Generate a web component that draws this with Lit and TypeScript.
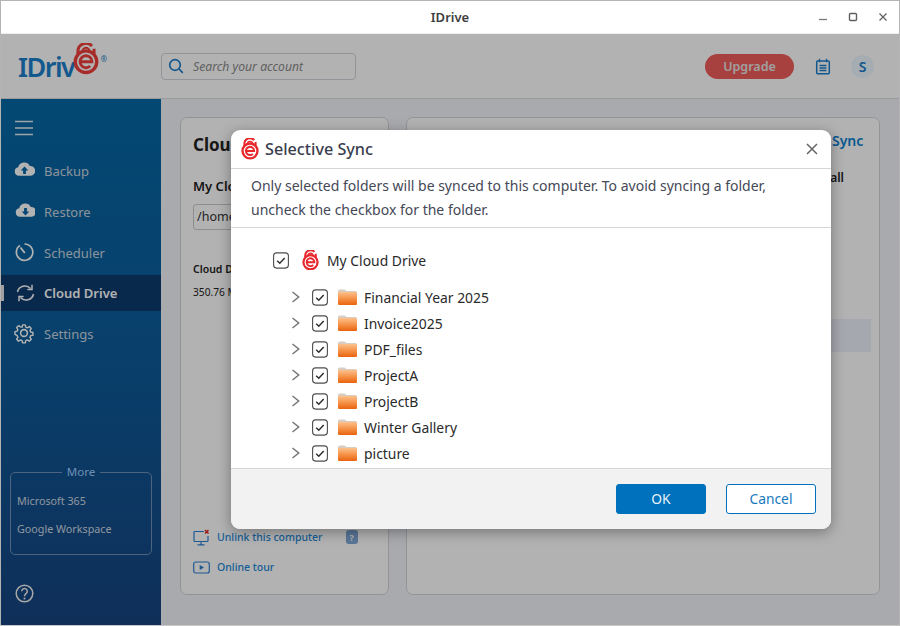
import { LitElement, html, css, svg } from "lit";
import { customElement } from "lit/decorators.js";

const lock = (size: number, cls = "") => html`<svg class="lock ${cls}" width="${size}" height="${size * 1.2}" viewBox="0 0 20 24">
  <path d="M3.800 8.500V6.500a6.200 6.200 0 0 1 10.800-4.200M16.200 4.500v4.500" fill="none" stroke="currentColor" stroke-width="2.300"/>
  <path d="M7.200 6.500a2.800 2.800 0 0 1 5.600 0" fill="none" stroke="currentColor" stroke-width="1.500"/>
  <circle cx="10" cy="14.400" r="8.300" fill="#fff" stroke="currentColor" stroke-width="2.600"/>
  <path d="M5.400 14.400h9.200a4.600 4.600 0 1 0-1.400 3.300" fill="none" stroke="currentColor" stroke-width="2.200"/>
</svg>`;

const chk = html`<svg class="chk" width="16" height="17" viewBox="0 0 16 17">
  <rect x=".6" y=".9" width="14.800" height="15.200" rx="3" fill="#fff" stroke="#4d4d4d" stroke-width="1.100"/>
  <path d="M4.200 8.800l2.600 2.500 4.900-5.200" fill="none" stroke="#2f2f2f" stroke-width="1.500"/>
</svg>`;

const folder = html`<svg class="folder" width="19" height="16" viewBox="0 0 19 16">
  <defs><linearGradient id="fg" x1="0" y1="0" x2="0" y2="1"><stop offset="0" stop-color="#fcc18c"/><stop offset=".55" stop-color="#f58e42"/><stop offset="1" stop-color="#e8630f"/></linearGradient></defs>
  <path d="M0 2a1.500 1.500 0 0 1 1.500-1.500h5L8.500 2H17.500A1.500 1.500 0 0 1 19 3.500V6H0z" fill="#d8cdc0"/>
  <rect x="0" y="3" width="19" height="13" rx="1" fill="url(#fg)"/>
</svg>`;

const cloudPath = "M4.800 15.800a4.300 4.300 0 0 1-.6-8.500A6.200 6.200 0 0 1 15.800 6a4.900 4.900 0 0 1 .9 9.800z";
const navIcons: Record<string, unknown> = {
  Backup: svg`<path d="${cloudPath}" fill="#fff"/><path d="M10.500 6.500l-3.800 4h2.400v3.600h2.800v-3.600h2.400z" fill="#0667a8"/>`,
  Restore: svg`<path transform="translate(1 0)" d="${cloudPath}" fill="#fff"/><path d="M11.500 14.500l-3.800-4h2.400V7h2.800v3.500h2.400z" fill="#0667a8"/>`,
  Scheduler: svg`<path d="M6 3.400A8.200 8.200 0 1 0 10.500 2" fill="none" stroke="#fff" stroke-width="1.700"/><path d="M6.500 5.500l4.300 5.500" stroke="#fff" stroke-width="1.900" fill="none"/>`,
  "Cloud Drive": svg`<path d="M3.500 9a7.500 7.500 0 0 1 13-3.500M19.500 11a7.500 7.500 0 0 1-13 3.500" fill="none" stroke="#fff" stroke-width="1.500"/><path d="M18 1.800v4.600h-4.600M5 18.200v-4.600h4.600" fill="none" stroke="#fff" stroke-width="1.500"/>`,
  Settings: svg`<path d="M9 1.500h3l.5 2.500 1.800.8 2.200-1.400 2.100 2.100-1.400 2.200.8 1.800 2.500.5v3l-2.500.5-.8 1.800 1.400 2.200-2.100 2.100-2.200-1.400-1.800.8-.5 2.500H9l-.5-2.500-1.800-.8-2.200 1.400-2.100-2.100 1.400-2.200-.8-1.800L.5 12V9l2.500-.5.8-1.800-1.400-2.200 2.100-2.100 2.200 1.400L8.500 4z" transform="translate(.5 .5) scale(.9)" fill="none" stroke="#fff" stroke-width="1.600" stroke-linejoin="round"/><circle cx="10" cy="10" r="3.400" fill="none" stroke="#fff" stroke-width="1.600"/>`,
};

@customElement("app-root")
export class AppRoot extends LitElement {
  static styles = css`
    :host { display: block; position: relative; width: 900px; height: 626px; overflow: hidden;
      font-family: "Noto Sans", sans-serif; background: #fff; }
    .win { width: 900px; height: 626px; box-sizing: border-box; border: 1px solid #b4b4b4; border-bottom-color: #c8c8c8; display: flex; flex-direction: column; }
    .title { height: 32px; flex: none; display: flex; align-items: center; justify-content: center; position: relative;
      font-size: 13px; font-weight: 600; color: #3c3c3c; background: #fff; border-bottom: 1px solid #eee; }
    .wc { position: absolute; right: 1px; top: 0; height: 32px; display: flex; align-items: center; }
    .wc svg { width: 30px; height: 14px; display: block; }
    .app { flex: 1; min-height: 0; position: relative; display: flex; flex-direction: column; }
    .head { height: 65px; flex: none; background: #fff; border-bottom: 1px solid #ddd; display: flex; align-items: center; box-sizing: border-box; padding: 0 25px 0 17px; }
    .logo { width: 143px; flex: none; display: flex; align-items: center; color: #1c80cc; font-size: 27px; font-weight: 600; letter-spacing: -1.500px; line-height: 1; position: relative; }
    .logo sup { font-size: 8px; letter-spacing: 0; color: #3a8ac8; align-self: flex-start; margin: 2px 0 0 1px; }
    .logo .lock { margin: -14px 0 0 -1px; color: #f0403c; }
    .search { width: 195px; height: 27px; box-sizing: border-box; border: 1px solid #d0d4da; border-radius: 4px; display: flex; align-items: center; gap: 9px; padding-left: 6px; color: #8b8b8b; font-size: 12.200px; font-style: italic; }
    .sp { flex: 1; }
    .up { width: 89px; height: 25px; border-radius: 13px; background: #f05d5b; color: #e6e6e6; display: flex; align-items: center; justify-content: center; font-size: 12.500px; font-weight: 600; }
    .cal { margin: 0 20px 0 21px; display: block; }
    .av { width: 23px; height: 23px; border-radius: 50%; background: #eef8ff; color: #1a7ccc; display: flex; align-items: center; justify-content: center; font-size: 14px; font-weight: 600; }
    .body { flex: 1; min-height: 0; display: flex; }
    .side { width: 160px; flex: none; background: linear-gradient(180deg, #0568a6 0%, #0d5b99 50%, #164480 100%); display: flex; flex-direction: column; color: #fff; }
    .burger { height: 51px; flex: none; display: flex; align-items: center; padding-left: 14px; padding-top: 6px; box-sizing: border-box; }
    .nav { display: flex; flex-direction: column; }
    .item { height: 41px; display: flex; align-items: center; gap: 9px; padding-left: 13px; font-size: 13px; color: #c8d4de; position: relative; }
    .item svg { width: 21px; height: 21px; flex: none; }
    .item.on { background: #0c3a6e; color: #fff; font-weight: 600; height: 36px; margin: 2px 0; }
    .item.on::before { content: ""; position: absolute; left: 0; top: 10px; width: 3px; height: 16px; background: #e4e4e4; }
    .more { margin: auto 9px 0 9px; height: 89px; border: 1px solid #6e90b8; border-radius: 5px; padding: 0 6px; box-sizing: border-box; min-width: 0; font-size: 10.750px; color: #cfd8e2; }
    .more legend { margin: 0 auto; padding: 0 5px; color: #9ecbff; font-size: 11.500px; line-height: 12px; }
    .more div { height: 28px; display: flex; align-items: center; }
    .more div:first-of-type { margin-top: 9px; }
    .help { padding: 29px 0 22px 14px; display: flex; }
    .main { flex: 1; min-width: 0; background: #f3f4fa; display: flex; gap: 17px; padding: 18px 19px 30px 19px; }
    .card { background: #fff; border: 1px solid #d5d5d8; border-radius: 7px; box-sizing: border-box; display: flex; flex-direction: column; min-width: 0; overflow: hidden; }
    .c1 { width: 209px; padding: 15px 12px 12px 12px; }
    .c2 { flex: 1; padding: 13px 8px 0 0; align-items: flex-end; }
    .c1 h2 { margin: 0; font-size: 17px; line-height: 24px; font-weight: 700; color: #222; white-space: nowrap; }
    .lbl { margin-top: 20px; font-size: 13px; line-height: 18px; font-weight: 600; color: #222; white-space: nowrap; }
    .inp { margin-top: 9px; height: 26px; box-sizing: border-box; border: 1px solid #ccc; border-radius: 3px; padding-left: 3px; font-size: 12.500px; line-height: 24px; color: #333; white-space: nowrap; overflow: hidden; }
    .q1 { margin-top: 32px; font-size: 10.500px; font-weight: 600; color: #222; white-space: nowrap; }
    .q2 { margin-top: 9px; font-size: 10.200px; color: #222; white-space: nowrap; }
    .link { display: flex; align-items: center; gap: 7px; color: #1e88d8; font-size: 10.500px; font-weight: 500; height: 30px; }
    .link b { margin-left: 16px; width: 12px; height: 14px; border-radius: 3px; background: #7fa8d8; color: #fff; font-size: 9px; display: flex; align-items: center; justify-content: center; }
    .sync { font-size: 14px; font-weight: 600; color: #0b7fd0; width: 31px; line-height: 20px; margin-right: 8px; white-space: nowrap; text-align: right; }
    .all { margin: 19px 27px 0 0; font-size: 12px; font-weight: 600; color: #222; line-height: 16px; }
    .hl { margin: 133px 0 0 0; width: 200px; height: 33px; background: #eef1fb; }
    .scrim { position: absolute; inset: 0; background: rgba(0,0,0,.3); }
    .modal { position: absolute; left: 230px; top: 96px; width: 600px; height: 399px; background: #fff; border-radius: 9px; overflow: hidden; display: flex; flex-direction: column; box-shadow: 0 3px 14px rgba(0,0,0,.35); }
    .mh { height: 39px; flex: none; box-sizing: border-box; border-bottom: 1px solid #d6d6d6; display: flex; align-items: center; padding: 0 12px 0 10px; gap: 6px; font-size: 16.200px; font-weight: 500; color: #3a3d4e; }
    .mh .lock, .root .lock { color: #e8262c; }
    .mh .sp { flex: 1; }
    .desc { flex: none; height: 59px; box-sizing: border-box; padding: 5px 20px 0; border-bottom: 1px solid #d6d6d6; font-size: 14px; line-height: 24px; color: #454857; }
    .tree { flex: 1; min-height: 0; overflow: hidden; font-size: 13.900px; color: #2a2a2a; padding-top: 20px; box-sizing: border-box; }
    .root { display: flex; align-items: center; height: 24px; padding-left: 42px; }
    .root .lock { margin: 0 8px 0 13px; }
    .rows { margin-top: 12px; padding-left: 58px; }
    .row { height: 26px; display: flex; align-items: center; }
    .row .arr { width: 21px; flex: none; display: flex; padding-left: 2px; }
    .row .folder { margin: 0 7px 0 10px; }
    .mf { height: 61px; flex: none; box-sizing: border-box; border-top: 1px solid #d6d6d6; background: #f2f2f2; display: flex; justify-content: flex-end; align-items: center; gap: 20px; padding: 0 15px 0 0; }
    .btn { width: 90px; height: 30px; box-sizing: border-box; border-radius: 3px; border: 1px solid #0071bc; display: flex; align-items: center; justify-content: center; font-size: 13.800px; padding-bottom: 2px; }
    .ok { background: #0071bc; color: #e8f2f9; }
    .cancel { background: #fff; color: #1a78bd; }
  `;

  render() {
    const nav = ["Backup", "Restore", "Scheduler", "Cloud Drive", "Settings"];
    const rows = ["Financial Year 2025", "Invoice2025", "PDF_files", "ProjectA", "ProjectB", "Winter Gallery", "picture"];
    return html`<div class="win">
      <div class="title">IDrive
        <div class="wc">
          <svg viewBox="0 0 30 14"><path d="M11 9.500h8" stroke="#7a7a7a" stroke-width="1.300"/></svg>
          <svg viewBox="0 0 30 14"><rect x="11.500" y="3.500" width="7" height="7" rx="1" fill="none" stroke="#5f5f5f" stroke-width="1.400"/></svg>
          <svg viewBox="0 0 30 14"><path d="M11.500 3.500l7 7M18.500 3.500l-7 7" stroke="#5f5f5f" stroke-width="1.200"/></svg>
        </div>
      </div>
      <div class="app">
        <div class="head">
          <div class="logo">IDriv${lock(26)}<sup>®</sup></div>
          <div class="search">
            <svg width="16" height="16" viewBox="0 0 16 16"><circle cx="7" cy="7" r="5.300" fill="none" stroke="#1a7ccc" stroke-width="1.700"/><path d="M11 11l3.800 3.800" stroke="#1a7ccc" stroke-width="1.700"/></svg>
            Search your account
          </div>
          <div class="sp"></div>
          <div class="up">Upgrade</div>
          <svg class="cal" width="16" height="17" viewBox="0 0 16 17"><rect x="1.700" y="3" width="12.600" height="12.800" rx="1" fill="none" stroke="#1a7ccc" stroke-width="1.500"/><path d="M4.500 .8v3.500M11.500 .8v3.500M4.500 7.500h7M4.500 10h7M4.500 12.500h7" stroke="#1a7ccc" stroke-width="1.300"/></svg>
          <div class="av">S</div>
        </div>
        <div class="body">
          <div class="side">
            <div class="burger"><svg width="18" height="16" viewBox="0 0 18 16"><path d="M0 1.500h18M0 8h18M0 14.500h18" stroke="#e6ebef" stroke-width="1.300"/></svg></div>
            <div class="nav">
              ${nav.map((n) => html`<div class="item ${n === "Cloud Drive" ? "on" : ""}"><svg viewBox="0 0 21 21">${navIcons[n]}</svg>${n}</div>`)}
            </div>
            <fieldset class="more"><legend>More</legend><div>Microsoft 365</div><div>Google Workspace</div></fieldset>
            <div class="help"><svg width="19" height="19" viewBox="0 0 19 19"><circle cx="9.500" cy="9.500" r="8.300" fill="none" stroke="#eee" stroke-width="1.500"/><path d="M6.700 7.300a2.800 2.800 0 1 1 4.300 2.400c-1 .7-1.500 1.200-1.500 2.500" fill="none" stroke="#eee" stroke-width="1.500"/><circle cx="9.500" cy="14.500" r="1" fill="#eee"/></svg></div>
          </div>
          <div class="main">
            <div class="card c1">
              <h2>Cloud Drive</h2>
              <div class="lbl">My Cloud Drive folder</div>
              <div class="inp">/home/user/IDrive</div>
              <div class="q1">Cloud Drive usage</div>
              <div class="q2">350.76 MB used</div>
              <div class="sp"></div>
              <div class="link"><svg width="17" height="17" viewBox="0 0 17 17"><path d="M11 2.500H2a1 1 0 0 0-1 1v8a1 1 0 0 0 1 1h12a1 1 0 0 0 1-1V7M8 12.500v3M4.500 15.800h7" fill="none" stroke="#2a80d0" stroke-width="1.200"/><path d="M12 1l3.500 3.500M15.500 1L12 4.500" stroke="#e0261f" stroke-width="1.500"/></svg>Unlink this computer<b>?</b></div>
              <div class="link"><svg width="17" height="13" viewBox="0 0 17 13"><rect x=".7" y="1" width="15.600" height="11" rx="2" fill="none" stroke="#2a80d0" stroke-width="1.200"/><path d="M6.700 4l4.300 2.500L6.700 9z" fill="#2a80d0"/></svg>Online tour</div>
            </div>
            <div class="card c2">
              <div class="sync">Sync</div>
              <div class="all">all</div>
              <div class="hl"></div>
            </div>
          </div>
        </div>
        <div class="scrim"></div>
        <div class="modal">
          <div class="mh">${lock(18)}<span>Selective Sync</span><div class="sp"></div>
            <svg width="14" height="14" viewBox="0 0 14 14"><path d="M2 2l10 10M12 2L2 12" stroke="#666" stroke-width="1.500"/></svg></div>
          <div class="desc">Only selected folders will be synced to this computer. To avoid syncing a folder,<br>uncheck the checkbox for the folder.</div>
          <div class="tree">
            <div class="root">${chk}${lock(17)}My Cloud Drive</div>
            <div class="rows">
              ${rows.map((r) => html`<div class="row"><span class="arr"><svg width="10" height="14" viewBox="0 0 10 14"><path d="M1.500 2l6.200 5-6.200 5" fill="none" stroke="#777" stroke-width="1.500"/></svg></span>${chk}${folder}${r}</div>`)}
            </div>
          </div>
          <div class="mf"><div class="btn ok">OK</div><div class="btn cancel">Cancel</div></div>
        </div>
      </div>
    </div>`;
  }
}
